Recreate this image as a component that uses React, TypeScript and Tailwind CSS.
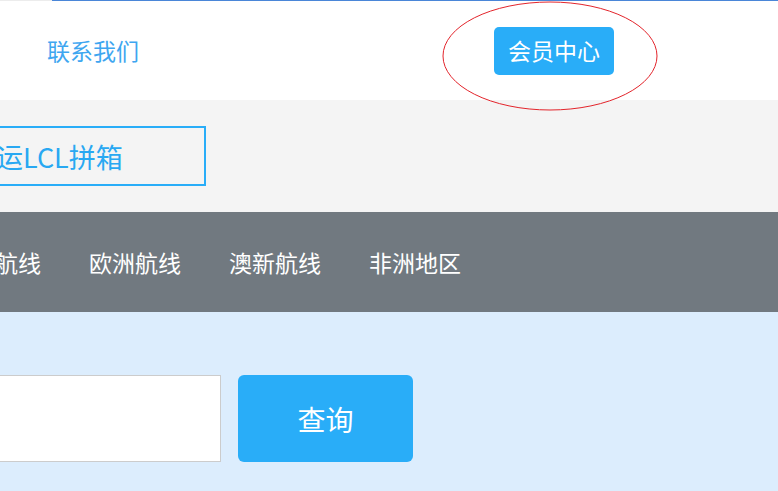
export default function App() {
  const routes = ["美加航线", "欧洲航线", "澳新航线", "非洲地区"];

  return (
    <div
      className="relative w-[778px] h-[491px] overflow-hidden bg-[#dcedfd]"
      style={{ fontFamily: '"Noto Sans CJK SC", "Noto Sans", sans-serif' }}
    >
      {/* top strip */}
      <div className="flex h-px">
        <div className="w-[52px] bg-[#ececec]" />
        <div className="flex-1 bg-[#4a86d8]" />
      </div>

      {/* header */}
      <header className="flex items-center h-[99px] bg-white">
        <a className="ml-[47px] text-[23px] text-[#3ea6f0] leading-none">联系我们</a>
        <button className="ml-[355px] h-[48px] px-[14px] rounded-[5px] bg-[#29adf8] text-white text-[23px] leading-none">
          会员中心
        </button>
      </header>

      {/* tab band */}
      <div className="flex items-center h-[112px] bg-[#f4f4f4]">
        <div className="flex items-center h-[60px] w-[315px] -ml-[109px] border-2 border-[#29adf8] pl-[76px] text-[27px] text-[#29a8f2] whitespace-nowrap leading-none">
          海运LCL拼箱
        </div>
      </div>

      {/* route nav */}
      <nav className="flex items-center h-[100px] bg-[#717980] -ml-[51px] gap-[48px]">
        {routes.map((r) => (
          <span key={r} className="text-[23px] text-white whitespace-nowrap leading-none">
            {r}
          </span>
        ))}
      </nav>

      {/* search */}
      <div className="flex items-start pt-[63px]">
        <input
          className="h-[87px] w-[300px] -ml-[79px] bg-white border border-[#cccccc] outline-none"
          type="text"
        />
        <button className="ml-[17px] h-[87px] w-[175px] rounded-[6px] bg-[#29adf8] text-white text-[28px] leading-none">
          查询
        </button>
      </div>

      {/* red annotation ellipse */}
      <svg className="absolute left-0 top-0 pointer-events-none" width="778" height="120">
        <ellipse cx="550" cy="56" rx="107" ry="54" fill="none" stroke="#e3242b" strokeWidth="1" />
      </svg>
    </div>
  );
}
